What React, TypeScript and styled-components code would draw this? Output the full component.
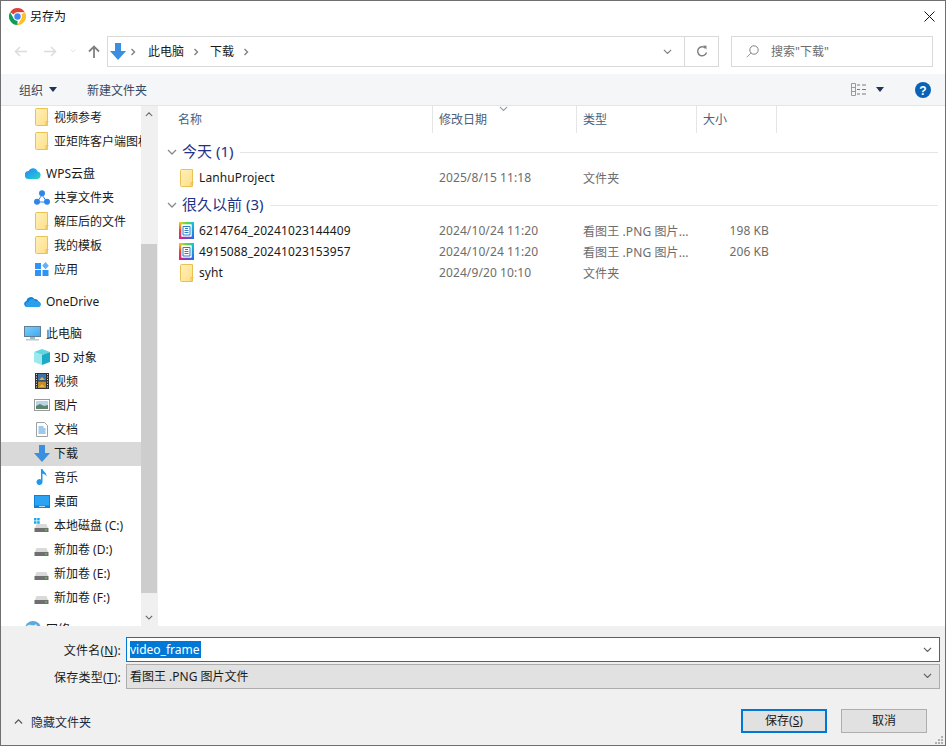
import React from "react";
import styled, { createGlobalStyle } from "styled-components";

const Global = createGlobalStyle`
  html, body { margin: 0; padding: 0; background: #fff; overflow: hidden; }
  * { box-sizing: border-box; }
  body { font-family: "Noto Sans", "Noto Sans CJK SC", sans-serif; font-size: 12px; color: #1a1a1a; }
  svg { display: block; flex: none; }
`;

const Window = styled.div`
  width: 946px; height: 746px; border: 1px solid #6f6f6f; display: flex; flex-direction: column;
  background: #fff; overflow: hidden;
`;
const TitleBar = styled.div`
  height: 30px; flex: none; display: flex; align-items: center; padding: 0 10px 0 8px; gap: 4px;
`;
const TitleText = styled.span`font-size: 12px; flex: 1; color: #111;`;
const NavBar = styled.div`
  height: 43px; flex: none; display: flex; align-items: flex-start; padding: 5px 12px 0 12px;
`;
const NavButtons = styled.div`
  width: 94px; height: 30px; flex: none; display: flex; align-items: center;
`;
const NavSlot = styled.span<{ $w: number }>`
  width: ${(p) => p.$w}px; flex: none; display: flex; justify-content: center;
`;
const AddressBox = styled.div`
  width: 612px; height: 31px; flex: none; border: 1px solid #d9d9d9; display: flex; align-items: center; padding-left: 2px;
`;
const Crumb = styled.span<{ $l: number }>`
  color: #1a1a1a; font-size: 12px; margin: 0 9px 2px ${(p) => p.$l}px;
`;
const CrumbFill = styled.div`flex: 1;`;
const AddrAction = styled.span<{ $w: number; $line?: boolean }>`
  width: ${(p) => p.$w}px; height: 100%; display: flex; align-items: center; justify-content: center;
  border-left: ${(p) => (p.$line ? "1px solid #d9d9d9" : "none")};
`;
const SearchBox = styled.div`
  width: 202px; height: 31px; margin-left: 12px; border: 1px solid #d9d9d9; display: flex; align-items: center;
  padding-left: 14px; gap: 12px; color: #6d6d6d; font-size: 12px;
`;
const SearchText = styled.span`margin-bottom: 1px;`;
const Toolbar = styled.div`
  height: 32px; flex: none; background: #f5f6f7; border-bottom: 1px solid #e5e5e5; display: flex; align-items: center;
  padding: 0 14px 0 18px; color: #38485f; font-size: 12px;
`;
const ToolItem = styled.span`display: flex; align-items: center; gap: 6px;`;
const NewFolder = styled.span`margin-left: 30px; flex: 1;`;
const ViewBtn = styled.span`display: flex; align-items: center; gap: 9px; margin-right: 31px;`;

const Main = styled.div`height: 520px; flex: none; display: flex; overflow: hidden;`;
const Sidebar = styled.div`
  width: 140px; flex: none; overflow: hidden; white-space: nowrap;
`;
const NavRow = styled.div<{ $depth: number; $sel?: boolean; $gap?: boolean }>`
  height: 24px; display: flex; align-items: center; overflow: hidden;
  margin-top: ${(p) => (p.$gap ? 8 : 0)}px;
  padding: 0 0 2px ${(p) => (p.$depth ? 32 : 23)}px; gap: ${(p) => (p.$depth ? 4 : 5)}px;
  background: ${(p) => (p.$sel ? "#d9d9d9" : "transparent")};
  font-size: 12px; color: #1a1a1a;
`;
const IconBox = styled.span`width: 17px; height: 18px; flex: none; display: flex; align-items: center; justify-content: center;`;
const FileIconBox = styled.span`width: 16px; height: 18px; flex: none; display: flex; align-items: center; justify-content: flex-end;`;
const Scrollbar = styled.div`
  width: 16px; flex: none; background: #f0f0f0; display: flex; flex-direction: column;
`;
const ScrollBtn = styled.div`height: 17px; flex: none; display: flex; align-items: center; justify-content: center;`;
const ScrollTrack = styled.div`flex: 1; padding: 121px 0 16px;`;
const ScrollThumb = styled.div`height: 349px; background: #cdcdcd;`;

const ListPane = styled.div`flex: 1; min-width: 0; border-left: 1px solid #f0f0f0; position: relative;`;
const HeaderRow = styled.div`
  height: 27px; display: flex; color: #4c607a; font-size: 12px;
`;
const HeaderCell = styled.div<{ $w: number }>`
  width: ${(p) => p.$w}px; flex: none; border-right: 1px solid #e5e5e5; display: flex; align-items: center; padding: 0 0 1px 6px;
`;
const NameHeader = styled(HeaderCell)`padding-left: 20px;`;
const SortCaret = styled.span`position: absolute; left: 341px; top: 0;`;
const Group = styled.div<{ $top: number }>`
  display: flex; align-items: center; height: 20px; margin-top: ${(p) => p.$top}px; padding: 0 7px 0 9px;
  color: #1e3287; font-size: 15px; gap: 5px;
`;
const GroupTitle = styled.span`margin-bottom: 4px;`;
const GroupLine = styled.div`flex: 1; height: 1px; background: #e5e5e5; margin-left: 2px;`;
const FileRow = styled.div`height: 21px; display: flex; align-items: center; font-size: 12px; color: #6d6d6d; letter-spacing: 0.1px;`;
const FileName = styled.div`
  width: 275px; flex: none; display: flex; align-items: center; gap: 5px; padding-left: 20px; color: #1a1a1a;
`;
const FileDate = styled.div`width: 144px; flex: none; padding-left: 6px;`;
const FileType = styled.div`width: 120px; flex: none; padding-left: 6px; white-space: nowrap; overflow: hidden;`;
const FileSize = styled.div`width: 72px; flex: none; text-align: right;`;
const RowGap = styled.div<{ $h: number }>`height: ${(p) => p.$h}px;`;

const Footer = styled.div`flex: 1; background: #f0f0f0; display: flex; flex-direction: column; padding: 11px 5px 0 0;`;
const FieldRow = styled.div`display: flex; align-items: center; height: 25px; margin-bottom: 2px;`;
const FieldLabel = styled.span`
  width: 125px; flex: none; text-align: right; padding-right: 5px; color: #1a1a1a; font-size: 12px; white-space: nowrap; letter-spacing: 0.25px;
`;
const FieldBox = styled.div<{ $focus?: boolean }>`
  flex: 1; height: 25px; display: flex; align-items: center; justify-content: space-between;
  padding: ${(p) => (p.$focus ? "0 7px 0 3px" : "0 7px 2px 3px")};
  border: ${(p) => (p.$focus ? "1px solid #0078d7" : "1px solid #adadad")};
  background: ${(p) => (p.$focus ? "#fff" : "#e1e1e1")}; font-size: 12px; color: #1a1a1a;
`;
const Selected = styled.span`background: #0078d7; color: #fff; line-height: 17px; padding: 0 1px 0 0;`;
const ActionRow = styled.div`display: flex; align-items: center; margin-top: 18px; height: 24px; padding-left: 13px; position: relative;`;
const HideToggle = styled.span`display: flex; align-items: center; gap: 8px; flex: 1; color: #1e2a3a; font-size: 12px; padding-top: 2px;`;
const DialogButton = styled.div<{ $primary?: boolean }>`
  width: 86px; height: 24px; margin-left: 14px; padding-bottom: 2px; display: flex; align-items: center; justify-content: center;
  background: #e1e1e1; font-size: 12px; color: #1a1a1a;
  border: ${(p) => (p.$primary ? "2px solid #0078d7" : "1px solid #adadad")};
`;
const ButtonsEnd = styled.div`width: 13px; flex: none;`;
const Grip = styled.span`position: absolute; right: -4px; bottom: -12px;`;

const Chevron = ({ up, color = "#666", size = 10 }: { up?: boolean; color?: string; size?: number }) => (
  <svg width={size} height={size * 0.6} viewBox="0 0 10 6" fill="none">
    <path d={up ? "M1 5l4-4 4 4" : "M1 1l4 4 4-4"} stroke={color} strokeWidth="1.3" />
  </svg>
);
const Caret = () => (
  <svg width="8" height="5" viewBox="0 0 8 5"><path d="M0 0h8L4 5z" fill="#1f3558" /></svg>
);
const Sep = () => (
  <svg width="6" height="8" viewBox="0 0 6 8" fill="none"><path d="M1.500 1l3 3-3 3" stroke="#808080" strokeWidth="1.400" /></svg>
);
const chromeSeg = "M8 0A8 8 0 0 1 14.930 4H8A4 4 0 0 0 4.540 6L1.070 4A8 8 0 0 1 8 0z";
const ChromeLogo = () => (
  <svg width="17" height="17" viewBox="0 0 16 16">
    <circle cx="8" cy="8" r="8" fill="#fff" />
    <path d={chromeSeg} fill="#dc4437" />
    <path d={chromeSeg} fill="#fbc02d" transform="rotate(120 8 8)" />
    <path d={chromeSeg} fill="#0f9d58" transform="rotate(240 8 8)" />
    <circle cx="8" cy="8" r="3.800" fill="#fff" /><circle cx="8" cy="8" r="3" fill="#4285f4" />
  </svg>
);
const Folder = () => (
  <svg width="14" height="18" viewBox="0 0 14 18">
    <defs>
      <linearGradient id="fg" x1="0" y1="0" x2="1" y2="1"><stop offset="0" stopColor="#fff0bb" /><stop offset="1" stopColor="#fedf87" /></linearGradient>
    </defs>
    <path d="M.5 1.500a1 1 0 0 1 1-1h11v17h-11a1 1 0 0 1-1-1z" fill="url(#fg)" stroke="#e8c252" />
    <path d="M11 17.500v-4h2.500" fill="none" stroke="#e8c252" />
  </svg>
);
const ArrowDownBlue = ({ s = 16 }: { s?: number }) => (
  <svg width={s} height={s + 1} viewBox="0 0 16 17"><path d="M5 0h6v8h5l-8 9-8-9h5z" fill="#3a8fe0" /></svg>
);
const WpsCloud = () => (
  <svg width="16" height="12" viewBox="0 0 16 12">
    <defs><linearGradient id="wc" x1="0" y1="0" x2="1" y2="1"><stop offset="0" stopColor="#2f7df0" /><stop offset=".6" stopColor="#21b6e4" /><stop offset="1" stopColor="#31d8a5" /></linearGradient></defs>
    <path d="M4 12a4 4 0 0 1-.5-8A5 5 0 0 1 12.600 4.500 3.800 3.800 0 0 1 12 12z" fill="url(#wc)" />
  </svg>
);
const ShareIcon = () => (
  <svg width="16" height="15" viewBox="0 0 16 15" fill="#2f86ea">
    <path d="M8 5L3 12M8 5l5 7M3 12h10" stroke="#2f86ea" strokeWidth="1" />
    <circle cx="8" cy="3.200" r="3" /><circle cx="3" cy="11.800" r="3" /><circle cx="13" cy="11.800" r="3" />
  </svg>
);
const AppsIcon = () => (
  <svg width="14" height="14" viewBox="0 0 14 14" fill="#2f93f5">
    <rect x="0" y="1" width="6" height="6" /><rect x="0" y="8" width="6" height="6" /><rect x="7.500" y="8" width="6" height="6" />
    <path d="M10.500 0l3.300 3.800-3.300 3.400-3.300-3.400z" fill="#63b1f8" />
  </svg>
);
const OneDriveIcon = () => (
  <svg width="17" height="11" viewBox="0 0 17 11">
    <path d="M3 11a3 3 0 0 1-.6-5.900A4.500 4.500 0 0 1 10.500 3a3.500 3.500 0 0 1 4 2.500A2.800 2.800 0 0 1 14.500 11z" fill="#1480d8" />
    <path d="M4 11a2.500 2.500 0 0 1 .3-5 4 4 0 0 1 7.500-.6 3 3 0 0 1 4.600 2.100A2.800 2.800 0 0 1 14.500 11z" fill="#2ba0ea" />
  </svg>
);
const PcIcon = () => (
  <svg width="17" height="15" viewBox="0 0 17 15">
    <defs><linearGradient id="pc" x1="0" y1="0" x2="1" y2="1"><stop offset="0" stopColor="#7cd0fa" /><stop offset="1" stopColor="#3ea8ee" /></linearGradient></defs>
    <rect x=".5" y=".5" width="16" height="10" fill="url(#pc)" stroke="#5f7f96" />
    <rect x="6" y="11" width="5" height="2" fill="#a3b8c6" /><rect x="2" y="13" width="13" height="1.500" fill="#b9cad6" />
  </svg>
);
const CubeIcon = () => (
  <svg width="16" height="16" viewBox="0 0 16 16">
    <path d="M8 0l8 3-8 3-8-3z" fill="#5fd6e0" /><path d="M0 3l8 3v10l-8-3z" fill="#9be9ee" /><path d="M16 3L8 6v10l8-3z" fill="#1ea9c4" />
  </svg>
);
const VideoIcon = () => (
  <svg width="14" height="16" viewBox="0 0 14 16">
    <rect width="14" height="16" fill="#333" />
    <rect x="3" y="1" width="8" height="6.500" fill="#3d73a8" /><rect x="3" y="8.500" width="8" height="6.500" fill="#c48a2c" />
    <path d="M4 7l3-3 3 3zM4 14l3-3 3 3z" fill="#e8b33c" />
    <path d="M1 1.500h1M1 4h1M1 6.500h1M1 9h1M1 11.500h1M1 14h1M12 1.500h1M12 4h1M12 6.500h1M12 9h1M12 11.500h1M12 14h1" stroke="#ddd" />
  </svg>
);
const PicIcon = () => (
  <svg width="16" height="12" viewBox="0 0 16 12">
    <rect x=".5" y=".5" width="15" height="11" fill="#fff" stroke="#9a9a9a" />
    <rect x="2" y="2" width="12" height="8" fill="#b8d4e8" /><path d="M2 7l4-2 4 2 4-1v4H2z" fill="#5b8468" />
  </svg>
);
const DocIcon = () => (
  <svg width="12" height="15" viewBox="0 0 12 15" fill="none">
    <path d="M.5.5h8l3 3v11H.5z" fill="#fff" stroke="#a0a0a0" />
    <path d="M2.500 5h5M2.500 7h7M2.500 9h7M2.500 11h7" stroke="#3f94d8" />
  </svg>
);
const MusicIcon = () => (
  <svg width="12" height="16" viewBox="0 0 12 16">
    <path d="M5 0h1.500c.3 2.500 4.500 3.500 4 7.500C9.800 5.500 8 5 6.500 4.500V13a3 3 0 1 1-1.500-2.600z" fill="#1f97ee" />
  </svg>
);
const DesktopIcon = () => (
  <svg width="16" height="13" viewBox="0 0 16 13">
    <rect width="16" height="13" fill="#0f7fd8" /><rect x="1" y="1" width="14" height="9.500" fill="#2aa3f5" /><rect x="5" y="11" width="6" height="1" fill="#bfe0f8" />
  </svg>
);
const DiskIcon = ({ win }: { win?: boolean }) => (
  <svg width="15" height="15" viewBox="0 0 15 15">
    {win && <path d="M0 0h2.500v2.500H0zM3.200 0h2.500v2.500H3.200zM0 3.200h2.500v2.500H0zM3.200 3.200h2.500v2.500H3.200z" fill="#17a9ee" />}
    <path d="M2.500 6h10L14 10H1z" fill="#d9d9d9" />
    <rect x=".5" y="10" width="14" height="4" fill="#6f6f6f" /><rect x="11" y="11.500" width="2" height="1" fill="#5fe05f" />
  </svg>
);
const GlobeIcon = () => (
  <svg width="16" height="16" viewBox="0 0 16 16"><circle cx="8" cy="8" r="8" fill="#5ba8dc" /><path d="M2 5c3-3 6 1 9-2l2 3-5 2z" fill="#dcecf6" /></svg>
);
const PngIcon = () => (
  <svg width="15" height="17" viewBox="0 0 15 17">
    <defs>
      <linearGradient id="pt" x1="0" y1="0" x2="1" y2="0"><stop offset="0" stopColor="#f2d21c" /><stop offset=".5" stopColor="#63d44a" /><stop offset="1" stopColor="#18c8d8" /></linearGradient>
      <linearGradient id="pl" x1="0" y1="0" x2="0" y2="1"><stop offset="0" stopColor="#f2d21c" /><stop offset=".5" stopColor="#f0402f" /><stop offset="1" stopColor="#d81e9a" /></linearGradient>
      <linearGradient id="pr" x1="0" y1="0" x2="0" y2="1"><stop offset="0" stopColor="#18c8d8" /><stop offset="1" stopColor="#2668e8" /></linearGradient>
      <linearGradient id="pb" x1="0" y1="0" x2="1" y2="0"><stop offset="0" stopColor="#d81e9a" /><stop offset="1" stopColor="#2668e8" /></linearGradient>
    </defs>
    <rect width="15" height="2.500" fill="url(#pt)" />
    <rect y="14.500" width="15" height="2.500" fill="url(#pb)" />
    <rect width="2.500" height="17" fill="url(#pl)" />
    <rect x="12.500" width="2.500" height="17" fill="url(#pr)" />
    <rect x="2.500" y="2.500" width="10" height="12" fill="#fff" />
    <path d="M4 4.500h7v8.500H4zM6 6.500h3M5.500 8.500h4M5.500 10.500h4" fill="none" stroke="#2a7fc8" />
  </svg>
);

type Nav = { label: string; icon: React.ReactNode; depth: number; gap?: boolean; sel?: boolean };
const navItems: Nav[] = [
  { label: "视频参考", icon: <Folder />, depth: 1 },
  { label: "亚矩阵客户端图标", icon: <Folder />, depth: 1 },
  { label: "WPS云盘", icon: <WpsCloud />, depth: 0, gap: true },
  { label: "共享文件夹", icon: <ShareIcon />, depth: 1 },
  { label: "解压后的文件", icon: <Folder />, depth: 1 },
  { label: "我的模板", icon: <Folder />, depth: 1 },
  { label: "应用", icon: <AppsIcon />, depth: 1 },
  { label: "OneDrive", icon: <OneDriveIcon />, depth: 0, gap: true },
  { label: "此电脑", icon: <PcIcon />, depth: 0, gap: true },
  { label: "3D 对象", icon: <CubeIcon />, depth: 1 },
  { label: "视频", icon: <VideoIcon />, depth: 1 },
  { label: "图片", icon: <PicIcon />, depth: 1 },
  { label: "文档", icon: <DocIcon />, depth: 1 },
  { label: "下载", icon: <ArrowDownBlue />, depth: 1, sel: true },
  { label: "音乐", icon: <MusicIcon />, depth: 1 },
  { label: "桌面", icon: <DesktopIcon />, depth: 1 },
  { label: "本地磁盘 (C:)", icon: <DiskIcon win />, depth: 1 },
  { label: "新加卷 (D:)", icon: <DiskIcon />, depth: 1 },
  { label: "新加卷 (E:)", icon: <DiskIcon />, depth: 1 },
  { label: "新加卷 (F:)", icon: <DiskIcon />, depth: 1 },
  { label: "网络", icon: <GlobeIcon />, depth: 0, gap: true },
];

const FileLine = ({ icon, name, date, type, size }: { icon: React.ReactNode; name: string; date: string; type: string; size?: string }) => (
  <FileRow>
    <FileName><FileIconBox>{icon}</FileIconBox>{name}</FileName>
    <FileDate>{date}</FileDate>
    <FileType>{type}</FileType>
    <FileSize>{size}</FileSize>
  </FileRow>
);

export default function App() {
  return (
    <>
      <Global />
      <Window>
        <TitleBar>
          <ChromeLogo />
          <TitleText>另存为</TitleText>
          <svg width="11" height="11" viewBox="0 0 11 11" fill="none"><path d="M.5.5l10 10M10.500.5l-10 10" stroke="#111" strokeWidth="1" /></svg>
        </TitleBar>
        <NavBar>
          <NavButtons>
            <NavSlot $w={14}>
              <svg width="13" height="11" viewBox="0 0 13 11" fill="none"><path d="M13 5.500H1.500M6 1L1.500 5.500 6 10" stroke="#dcdcdc" strokeWidth="1.500" /></svg>
            </NavSlot>
            <NavSlot $w={16} />
            <NavSlot $w={14}>
              <svg width="13" height="11" viewBox="0 0 13 11" fill="none"><path d="M0 5.500h11.500M7 1l4.500 4.500L7 10" stroke="#dcdcdc" strokeWidth="1.500" /></svg>
            </NavSlot>
            <NavSlot $w={9} />
            <NavSlot $w={14}><Chevron color="#dcdcdc" size={6} /></NavSlot>
            <NavSlot $w={27}>
              <svg width="12" height="13" viewBox="0 0 12 13" fill="none"><path d="M6 13V1.500M1 6.500l5-5 5 5" stroke="#808080" strokeWidth="1.800" /></svg>
            </NavSlot>
          </NavButtons>
          <AddressBox>
            <ArrowDownBlue />
            <NavSlot $w={14}><Sep /></NavSlot>
            <Crumb $l={8}>此电脑</Crumb>
            <Sep />
            <Crumb $l={11}>下载</Crumb>
            <Sep />
            <CrumbFill />
            <AddrAction $w={33}><Chevron color="#808080" size={9} /></AddrAction>
            <AddrAction $w={34} $line>
              <svg width="12" height="13" viewBox="0 0 12 13" fill="none"><path d="M9.500 3.200A4.500 4.500 0 1 0 10.500 7.500" stroke="#808080" strokeWidth="1.400" /><path d="M7 .5l3.500.3v3.700z" fill="#808080" /></svg>
            </AddrAction>
          </AddressBox>
          <SearchBox>
            <svg width="13" height="13" viewBox="0 0 13 13" fill="none"><circle cx="8" cy="5" r="4.200" stroke="#808080" /><path d="M5 8L.8 12.200" stroke="#c8808a" /></svg>
            <SearchText>搜索"下载"</SearchText>
          </SearchBox>
        </NavBar>
        <Toolbar>
          <ToolItem>组织 <Caret /></ToolItem>
          <NewFolder>新建文件夹</NewFolder>
          <ViewBtn>
            <svg width="16" height="13" viewBox="0 0 16 13" fill="none"><path d="M.5.5h4v12h-4zM.5 4.500h4M.5 8.500h4" stroke="#9a9a9a" /><path d="M6 2h3M11 2h4M6 6.500h3M11 6.500h4M6 11h3M11 11h4" stroke="#7a7a7a" /></svg>
            <Caret />
          </ViewBtn>
          <svg width="16" height="16" viewBox="0 0 16 16"><circle cx="8" cy="8" r="8" fill="#0a62b8" /><text x="8" y="12.500" textAnchor="middle" fontSize="12" fontWeight="700" fill="#fff" fontFamily="Liberation Sans">?</text></svg>
        </Toolbar>
        <Main>
          <Sidebar>
            {navItems.map((n) => (
              <NavRow key={n.label} $depth={n.depth} $sel={n.sel} $gap={n.gap}>
                <IconBox>{n.icon}</IconBox>
                {n.label}
              </NavRow>
            ))}
          </Sidebar>
          <Scrollbar>
            <ScrollBtn><Chevron up color="#606060" size={8} /></ScrollBtn>
            <ScrollTrack><ScrollThumb /></ScrollTrack>
            <ScrollBtn><Chevron color="#606060" size={8} /></ScrollBtn>
          </Scrollbar>
          <ListPane>
            <SortCaret><Chevron color="#9aa0a8" size={9} /></SortCaret>
            <HeaderRow>
              <NameHeader $w={275}>名称</NameHeader>
              <HeaderCell $w={144}>修改日期</HeaderCell>
              <HeaderCell $w={120}>类型</HeaderCell>
              <HeaderCell $w={80}>大小</HeaderCell>
            </HeaderRow>
            <Group $top={9}>
              <Chevron color="#8a8a8a" size={10} /><GroupTitle>今天 (1)</GroupTitle><GroupLine />
            </Group>
            <RowGap $h={5} />
            <FileLine icon={<Folder />} name="LanhuProject" date="2025/8/15 11:18" type="文件夹" />
            <Group $top={7}>
              <Chevron color="#8a8a8a" size={10} /><GroupTitle>很久以前 (3)</GroupTitle><GroupLine />
            </Group>
            <RowGap $h={5} />
            <FileLine icon={<PngIcon />} name="6214764_20241023144409" date="2024/10/24 11:20" type="看图王 .PNG 图片..." size="198 KB" />
            <FileLine icon={<PngIcon />} name="4915088_20241023153957" date="2024/10/24 11:20" type="看图王 .PNG 图片..." size="206 KB" />
            <FileLine icon={<Folder />} name="syht" date="2024/9/20 10:10" type="文件夹" />
          </ListPane>
        </Main>
        <Footer>
          <FieldRow>
            <FieldLabel>文件名(<u>N</u>):</FieldLabel>
            <FieldBox $focus>
              <Selected>video_frame</Selected>
              <Chevron color="#606060" size={9} />
            </FieldBox>
          </FieldRow>
          <FieldRow>
            <FieldLabel>保存类型(<u>T</u>):</FieldLabel>
            <FieldBox>
              看图王 .PNG 图片文件
              <Chevron color="#606060" size={9} />
            </FieldBox>
          </FieldRow>
          <ActionRow>
            <HideToggle><Chevron up color="#555" size={9} />隐藏文件夹</HideToggle>
            <DialogButton $primary>保存(<u>S</u>)</DialogButton>
            <DialogButton>取消</DialogButton>
            <ButtonsEnd />
            <Grip>
              <svg width="10" height="10" viewBox="0 0 10 10" fill="#b0b0b0"><rect x="7" y="1" width="2" height="2" /><rect x="4" y="4" width="2" height="2" /><rect x="7" y="4" width="2" height="2" /><rect x="1" y="7" width="2" height="2" /><rect x="4" y="7" width="2" height="2" /><rect x="7" y="7" width="2" height="2" /></svg>
            </Grip>
          </ActionRow>
        </Footer>
      </Window>
    </>
  );
}
